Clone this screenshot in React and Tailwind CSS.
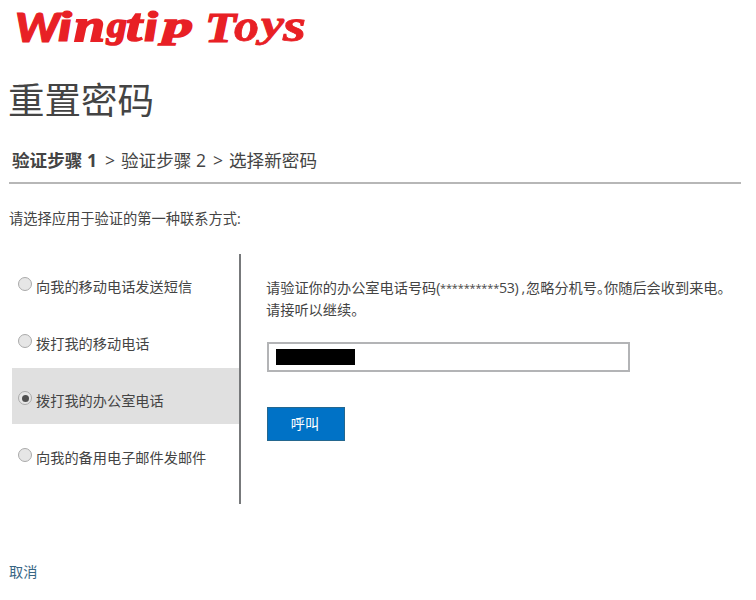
const contactOptions = [
  { label: '向我的移动电话发送短信', selected: false },
  { label: '拨打我的移动电话', selected: false },
  { label: '拨打我的办公室电话', selected: true },
  { label: '向我的备用电子邮件发邮件', selected: false },
];

const sans = "font-['Lato',sans-serif] font-black";
const serif = "font-['Liberation_Serif',serif] font-bold";

// Each letter has its own size and baseline, giving the wordmark short descenders and a tall x-height.
const wordmark = [
  { char: 'W', x: 15, y: 42, size: 40, width: 45, stroke: 1, face: sans },
  { char: 'i', x: 58, y: 41, size: 39, width: 14, stroke: 1, face: sans },
  { char: 'n', x: 74, y: 41, size: 47, width: 31, stroke: 1.8, face: serif },
  { char: 'g', x: 107, y: 37, size: 36, width: 20, stroke: 1.6, face: serif },
  { char: 't', x: 126, y: 41, size: 46, width: 16, stroke: 1.6, face: serif },
  { char: 'i', x: 144, y: 41, size: 39, width: 14, stroke: 1, face: sans },
  { char: 'p', x: 163, y: 37, size: 36, width: 30, stroke: 1.6, face: serif },
  { char: 'T', x: 205, y: 42, size: 43, width: 31, stroke: 1.2, face: serif },
  { char: 'o', x: 234, y: 41, size: 47, width: 25, stroke: 0.8, face: serif },
  { char: 'y', x: 261, y: 37, size: 37, width: 23, stroke: 0.8, face: serif },
  { char: 's', x: 283, y: 41, size: 47, width: 23, stroke: 0.8, face: serif },
];

function Logo() {
  return (
    <svg className="block h-[50px] w-[320px] overflow-visible" viewBox="0 0 320 50" role="img" aria-label="Wingtip Toys">
      <text className="italic" fill="#e82025" stroke="#e82025">
        {wordmark.map(({ char, x, y, size, width, stroke, face }) => (
          <tspan
            key={x}
            className={face}
            x={x}
            y={y}
            fontSize={size}
            strokeWidth={stroke}
            textLength={width}
            lengthAdjust="spacingAndGlyphs"
          >
            {char}
          </tspan>
        ))}
      </text>
    </svg>
  );
}

function Option({ label, selected }) {
  return (
    <label className={`ml-3 flex h-[56px] items-center pl-[6px] ${selected ? 'bg-[#e0e0e0]' : ''}`}>
      <span className="mr-1 mt-[4px] flex h-[14px] w-[14px] items-center justify-center rounded-full border border-[#aaaaaa] bg-[#e6e6e6]">
        {selected && <span className="h-[7px] w-[7px] rounded-full bg-[#505050]" />}
      </span>
      <span className="whitespace-nowrap pt-[10px]">{label}</span>
    </label>
  );
}

export default function App() {
  return (
    <div className="h-[600px] w-[756px] overflow-hidden bg-white font-['Open_Sans','Noto_Sans_CJK_SC',sans-serif] text-[14.2px] leading-[22px] text-[#444444]">
      <Logo />
      <h1 className="ml-2 mt-[24px] h-[50px] font-['Noto_Sans_CJK_SC',sans-serif] text-[36.5px] font-normal leading-[50px]">重置密码</h1>
      <nav className="ml-3 mt-[24px] flex h-6 items-center whitespace-nowrap text-[17.6px] leading-6">
        <span className="w-[93px] font-bold">验证步骤 1</span>
        <span className="w-4">&gt;</span>
        <span className="w-[92px]">验证步骤 2</span>
        <span className="w-4">&gt;</span>
        <span>选择新密码</span>
      </nav>
      <div className="ml-[9px] mt-[10px] h-[2px] w-[732px] bg-[#b7b7b7]" />
      <p className="ml-[9px] mt-6 h-[22px] text-[14.25px]">请选择应用于验证的第一种联系方式:</p>
      <main className="mt-[24px] flex h-[250px]">
        <section className="flex w-[241px] flex-col gap-px border-r-2 border-[#77797b]">
          {contactOptions.map((option) => (
            <Option key={option.label} {...option} />
          ))}
        </section>
        <section className="ml-[25px] pt-[23px]">
          <p className="flex whitespace-nowrap">
            <span className="w-[174px]">请验证你的办公室电话号码(</span>
            <span className="w-[59px] text-[11px] tracking-[-0.15px]">**********</span>
            <span className="w-[27px] tracking-[-0.4px]">53) ,</span>
            <span className="w-[78px]">忽略分机号。</span>
            <span>你随后会收到来电。</span>
          </p>
          <p>请接听以继续。</p>
          <div className="ml-px mt-[21px] flex h-[30px] w-[363px] items-center border-2 border-[#b3b4b6] bg-white pl-[7px]">
            <span className="h-4 w-[79px] bg-black" />
          </div>
          <button className="ml-px mt-[35px] block h-[34px] w-[78px] border border-[#24678f] bg-[#0072c6] pr-[2px] text-white">呼叫</button>
        </section>
      </main>
      <a className="ml-[9px] mt-[57px] block text-[#386684]">取消</a>
    </div>
  );
}
